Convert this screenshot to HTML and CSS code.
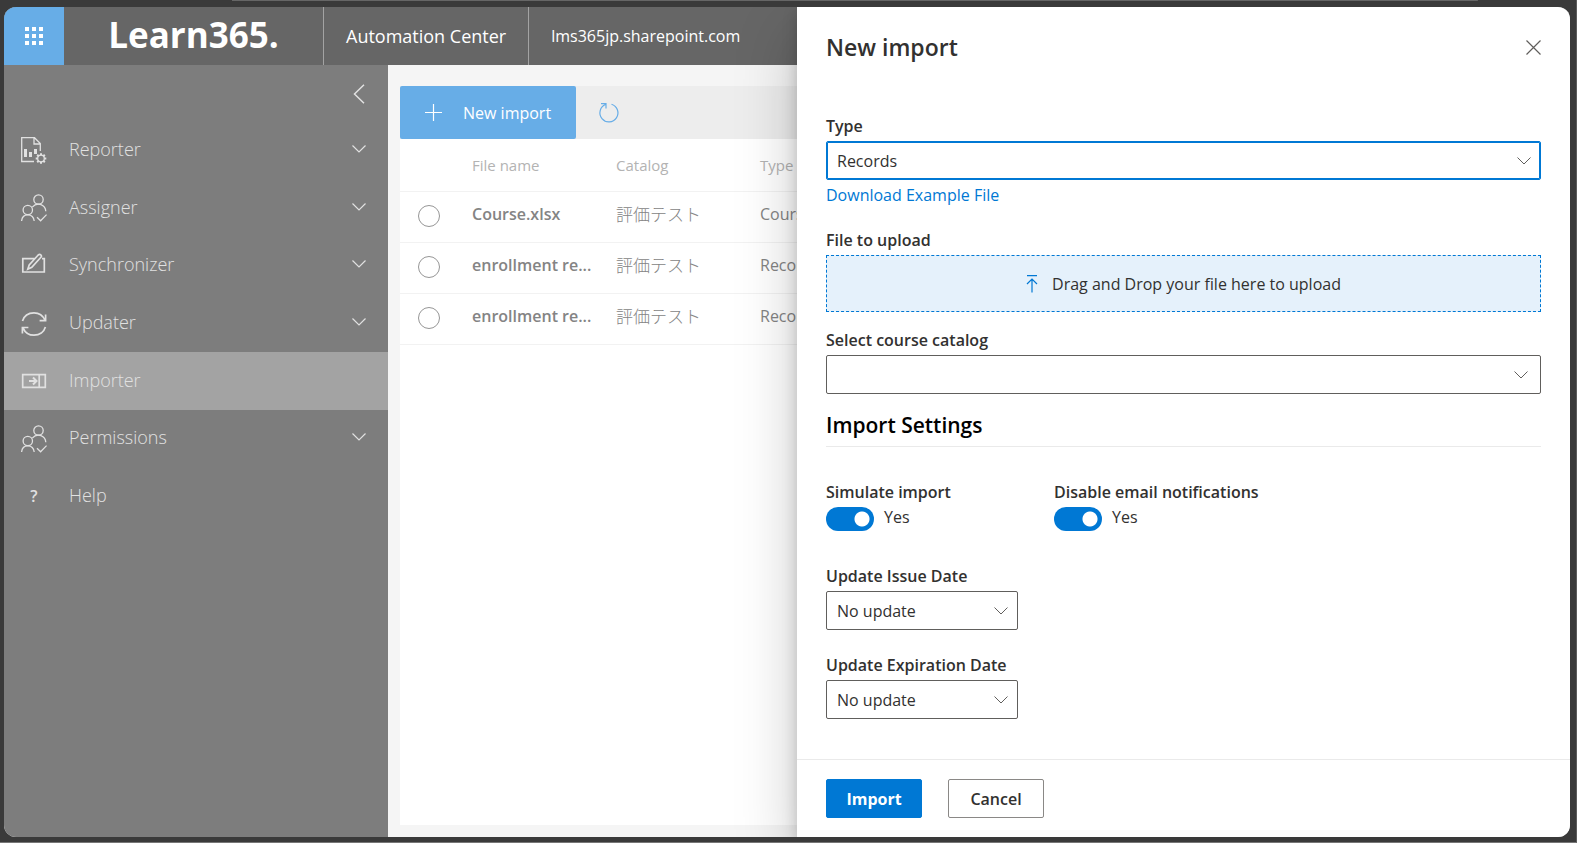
FILE: index.html
```html
<!DOCTYPE html>
<html lang="en">

<head>
    <meta charset="utf-8">
    <meta name="viewport" content="width=device-width, initial-scale=1.0">
    <title>Learn365 Automation Center</title>
    <link rel="stylesheet" href="styles.css">
</head>

<body>

    <!-- shared icons -->
    <svg class="symbols" aria-hidden="true">
        <symbol id="down" viewBox="0 0 14 8">
            <path d="M.5 .5L7 7L13.5 .5" />
        </symbol>
        <symbol id="people" viewBox="0 0 26 28">
            <circle cx="17.5" cy="5.5" r="4.7" />
            <circle cx="6.8" cy="16" r="4.7" />
            <path d="M11.3 13.2C13.5 10.6 17 9.6 20 10.7C22.8 11.8 24.6 14.3 24.8 17.2M.6 27C.9 23.3 3.4 20.8 6.8 20.8S12.8 23.3 13.2 27M16 23.3L19.6 26.8L25.6 20.6" />
        </symbol>
    </svg>

    <div class="window">
        <header class="topbar">
            <button class="waffle" aria-label="App launcher">
                <svg width="20" height="20" viewBox="0 0 20 20">
                    <path d="M1 1h4v4H1zM8 1h4v4H8zM15 1h4v4h-4zM1 8h4v4H1zM8 8h4v4H8zM15 8h4v4h-4zM1 15h4v4H1zM8 15h4v4H8zM15 15h4v4h-4z" />
                </svg>
            </button>
            <div class="logo">Learn365.</div>
            <div class="app-name">Automation Center</div>
            <div class="tenant">lms365jp.sharepoint.com</div>
        </header>

        <div class="main">
            <aside class="sidebar">
                <button class="collapse" aria-label="Collapse menu">
                    <svg class="line" width="12" height="20" viewBox="0 0 12 20">
                        <path d="M11 .8L1.5 10L11 19.2" />
                    </svg>
                </button>
                <nav>
                    <a href="#">
                        <svg class="icon" width="26" height="28" viewBox="0 0 26 28">
                            <path d="M13 24.5H.7V.7H13.5L19.3 6.5V14M13 .7V7H19.3" />
                            <path class="solid" d="M3 12h3v8H3zM8 15h3v5H8zM13 12h3v5h-3z" />
                            <circle cx="20" cy="21.5" r="3.3" />
                            <path class="teeth" d="M20 16.2v2M20 24.8v2M14.7 21.5h2M23.3 21.5h2M16.2 17.7l1.5 1.5M22.3 23.8l1.5 1.5M16.2 25.3l1.5-1.5M22.3 19.2l1.5-1.5" />
                        </svg>
                        <span>Reporter</span>
                        <svg class="down line"><use href="#down" /></svg>
                    </a>
                    <a href="#">
                        <svg class="icon" width="26" height="28"><use href="#people" /></svg>
                        <span>Assigner</span>
                        <svg class="down line"><use href="#down" /></svg>
                    </a>
                    <a href="#">
                        <svg class="icon bold" width="26" height="28" viewBox="0 0 26 28">
                            <path d="M14 6.6H1.8V20H23.3V6.6H21M6.8 17.2L8.2 13L17.2 3Q18.6 1.8 19.8 2.8Q21 4 19.9 5.3L10.8 15.4Z" />
                        </svg>
                        <span>Synchronizer</span>
                        <svg class="down line"><use href="#down" /></svg>
                    </a>
                    <a href="#">
                        <svg class="icon bold" width="26" height="28" viewBox="0 0 26 28">
                            <path d="M1.5 11C3 6 7.5 2.8 13 2.8C18 2.8 22 5.500 24 10.2M24.6 4.5V10.6H18.6M24.4 17C23 22 18.500 25.2 13 25.2C8 25.2 4 22.5 2 17.8M1.4 23.5V17.5H7.4" />
                        </svg>
                        <span>Updater</span>
                        <svg class="down line"><use href="#down" /></svg>
                    </a>
                    <a href="#" class="active">
                        <svg class="icon bold" width="26" height="28" viewBox="0 0 26 28">
                            <path d="M1.7 7.7H24.3V20.3H1.7ZM18.2 8V20" />
                            <path class="arrow" d="M8 14H15M12 10.5L15.5 14L12 17.5" />
                        </svg>
                        <span>Importer</span>
                    </a>
                    <a href="#">
                        <svg class="icon" width="26" height="28"><use href="#people" /></svg>
                        <span>Permissions</span>
                        <svg class="down line"><use href="#down" /></svg>
                    </a>
                    <a href="#">
                        <b class="question">?</b>
                        <span>Help</span>
                    </a>
                </nav>
            </aside>

            <main class="content">
                <div class="toolbar">
                    <button class="new-import">
                        <svg class="line" width="17" height="17" viewBox="0 0 17 17">
                            <path d="M8.5 0V17M0 8.5H17" />
                        </svg>
                        New import
                    </button>
                    <button class="refresh" aria-label="Refresh">
                        <svg class="line" width="22" height="22" viewBox="0 0 22 22">
                            <path d="M13.5 2.2A9 9 0 1 1 7.5 2.5M3 1.6H8V6.6" />
                        </svg>
                    </button>
                </div>
                <div class="list">
                    <table>
                        <thead>
                            <tr>
                                <th class="pick"></th>
                                <th>File name</th>
                                <th>Catalog</th>
                                <th>Type</th>
                                <th class="rest"></th>
                            </tr>
                        </thead>
                        <tbody>
                            <tr>
                                <td class="pick"><input type="radio" name="file" aria-label="Course.xlsx"></td>
                                <td class="file">Course.xlsx</td>
                                <td lang="ja">評価テスト</td>
                                <td>Courses</td>
                                <td></td>
                            </tr>
                            <tr>
                                <td class="pick"><input type="radio" name="file" aria-label="enrollment re..."></td>
                                <td class="file">enrollment re...</td>
                                <td lang="ja">評価テスト</td>
                                <td>Records</td>
                                <td></td>
                            </tr>
                            <tr>
                                <td class="pick"><input type="radio" name="file" aria-label="enrollment re..."></td>
                                <td class="file">enrollment re...</td>
                                <td lang="ja">評価テスト</td>
                                <td>Records</td>
                                <td></td>
                            </tr>
                        </tbody>
                    </table>
                </div>
            </main>
        </div>

        <form class="panel">
            <div class="panel-head">
                <h1>New import</h1>
                <button type="button" class="close" aria-label="Close">
                    <svg class="line" width="15" height="15" viewBox="0 0 15 15">
                        <path d="M.5 .5L14.5 14.5M14.5 .5L.5 14.5" />
                    </svg>
                </button>
            </div>

            <div class="panel-body">
                <div class="field type">
                    <label for="type">Type</label>
                    <div class="select focused">
                        <select id="type">
                            <option>Records</option>
                        </select>
                        <svg class="down line"><use href="#down" /></svg>
                    </div>
                    <a href="#">Download Example File</a>
                </div>

                <div class="field upload">
                    <label for="file">File to upload</label>
                    <label class="dropzone" for="file">
                        <svg class="line" width="12" height="18" viewBox="0 0 12 18">
                            <path d="M1 .6H11M6 17.5V4M1 9L6 4L11 9" />
                        </svg>
                        Drag and Drop your file here to upload
                    </label>
                    <input id="file" type="file" hidden>
                </div>

                <div class="field">
                    <label for="catalog">Select course catalog</label>
                    <div class="select combo">
                        <select id="catalog">
                            <option></option>
                        </select>
                        <svg class="down line"><use href="#down" /></svg>
                    </div>
                </div>

                <h2>Import Settings</h2>

                <div class="toggles">
                    <div>
                        <label for="simulate">Simulate import</label>
                        <div class="toggle">
                            <input id="simulate" type="checkbox" role="switch" checked>
                            <span>Yes</span>
                        </div>
                    </div>
                    <div>
                        <label for="emails">Disable email notifications</label>
                        <div class="toggle">
                            <input id="emails" type="checkbox" role="switch" checked>
                            <span>Yes</span>
                        </div>
                    </div>
                </div>

                <div class="dates">
                    <div>
                        <label for="issue">Update Issue Date</label>
                        <div class="select">
                            <select id="issue">
                                <option>No update</option>
                            </select>
                            <svg class="down line"><use href="#down" /></svg>
                        </div>
                    </div>
                    <div>
                        <label for="expiration">Update Expiration Date</label>
                        <div class="select">
                            <select id="expiration">
                                <option>No update</option>
                            </select>
                            <svg class="down line"><use href="#down" /></svg>
                        </div>
                    </div>
                </div>
            </div>

            <div class="panel-foot">
                <button type="button" class="primary">Import</button>
                <button type="button">Cancel</button>
            </div>
        </form>
    </div>

</body>

</html>
```
FILE: styles.css
```css
* {
    box-sizing: border-box;
}

body {
    margin: 0;
    height: 100vh;
    padding: 7px 6px 5px 4px;
    border-right: 1px solid #5c5c5c;
    border-bottom: 1px solid #777;
    background: #3a3a3a linear-gradient(#666, #666) 70% 0 / 79% 1px no-repeat;
    font-family: "Open Sans", "Noto Sans CJK JP", sans-serif;
    font-size: 16px;
    line-height: 24px;
    color: #323130;
}

button,
select {
    font: inherit;
    color: inherit;
}

button {
    padding: 0;
    border: none;
    background: none;
}

a {
    text-decoration: none;
}

.symbols {
    position: absolute;
    width: 0;
    height: 0;
}

.line {
    fill: none;
    stroke: currentColor;
    stroke-width: 1.2;
}

.down {
    width: 14px;
    height: 8px;
}

.window {
    position: relative;
    display: flex;
    flex-direction: column;
    height: 100%;
    overflow: hidden;
    border-radius: 12px;
    background: #f5f5f5;
}

/* top bar */

.topbar {
    display: flex;
    align-items: stretch;
    height: 58px;
    background: #666;
    color: #fff;
    line-height: 58px;
}

.waffle {
    display: flex;
    align-items: center;
    justify-content: center;
    width: 60px;
    background: #67ade7;
}

.waffle svg {
    fill: #fff;
}

.logo {
    width: 260px;
    border-right: 1px solid #a3a3a3;
    font-size: 35px;
    font-weight: 700;
    line-height: 56px;
    text-align: center;
}

.app-name {
    padding: 0 22px;
    border-right: 1px solid #a3a3a3;
    font-size: 18px;
}

.tenant {
    padding-left: 22px;
}

/* side menu */

.main {
    display: flex;
    flex: 1;
}

.sidebar {
    width: 384px;
    background: #7d7d7d;
    color: #e1e1e1;
}

.collapse {
    display: block;
    height: 57px;
    margin-left: auto;
    padding: 0 23px;
}

.collapse svg {
    display: block;
    stroke-width: 1.5;
}

nav {
    display: flex;
    flex-direction: column;
    height: 403px;
}

nav a {
    display: flex;
    flex: 1;
    align-items: center;
    gap: 22px;
    padding: 0 22px 0 17px;
    color: inherit;
    font-size: 18px;
    font-weight: 300;
}

nav a span {
    flex: 1;
}

nav a span,
nav .down {
    margin-bottom: 3px;
}

nav .active {
    background: #a3a3a3;
}

.icon {
    fill: none;
    stroke: currentColor;
    stroke-width: 1.3;
}

.icon.bold {
    stroke-width: 1.7;
}

.icon .solid {
    fill: currentColor;
    stroke: none;
}

.icon .teeth,
.icon .arrow {
    stroke-width: 2;
}

.question {
    width: 26px;
    font-size: 16px;
    font-weight: 600;
    text-align: center;
}

/* import list */

.content {
    display: flex;
    flex: 1;
    flex-direction: column;
    padding: 21px 12px 12px;
}

.toolbar {
    display: flex;
    height: 53px;
    background: #ededed;
}

.new-import {
    display: flex;
    align-items: center;
    gap: 21px;
    padding: 0 25px;
    border-radius: 2px;
    background: #67ade7;
    color: #fff;
}

.refresh {
    padding: 0 22px;
    color: #67ade7;
}

.refresh svg {
    display: block;
}

.list {
    flex: 1;
    background: #fff;
}

table {
    width: 100%;
    border-collapse: collapse;
    table-layout: fixed;
    color: #848484;
}

th,
td {
    width: 144px;
    height: 51px;
    padding: 0 0 5px;
    border-bottom: 1px solid #f2f2f2;
    text-align: left;
}

th {
    height: 52px;
    padding: 0;
    color: #b3b3b3;
    font-size: 15px;
    font-weight: 400;
}

th.rest {
    width: auto;
}

td[lang="ja"] {
    font-family: "Noto Sans CJK JP", sans-serif;
    font-size: 17px;
    font-weight: 300;
}

.pick {
    width: 72px;
    padding: 0 0 2px 18px;
}

.pick input {
    display: block;
    width: 22px;
    height: 22px;
    margin: 0;
    appearance: none;
    border: 1px solid #969696;
    border-radius: 50%;
}

.file {
    font-weight: 600;
}

/* import panel */

.panel {
    position: absolute;
    top: 0;
    right: 0;
    bottom: 0;
    display: flex;
    flex-direction: column;
    width: calc(50% - 10px);
    background: #fff;
    box-shadow: 0 26px 58px rgba(0, 0, 0, .22), 0 5px 14px rgba(0, 0, 0, .18);
}

.panel-head {
    display: flex;
    align-items: center;
    justify-content: space-between;
    height: 80px;
    padding: 0 29px;
}

h1 {
    margin: 0;
    font-size: 23px;
    font-weight: 600;
}

.close {
    color: #605e5c;
}

.close svg {
    display: block;
}

.panel-body {
    flex: 1;
    padding: 27px 29px 0;
}

label {
    display: block;
    margin-bottom: 3px;
    font-weight: 600;
}

.field {
    margin-bottom: 16px;
}

.field.type {
    margin-bottom: 21px;
}

.field a {
    display: block;
    margin-top: 3px;
    color: #0078d4;
}

.select {
    position: relative;
    height: 39px;
}

.select select {
    width: 100%;
    height: 100%;
    padding: 0 10px;
    appearance: none;
    border: 1px solid #605e5c;
    border-radius: 2px;
    background: #fff;
}

.select.focused select {
    border-color: #0078d4;
    box-shadow: inset 0 0 0 1px #0078d4;
}

.select .down {
    position: absolute;
    top: 16px;
    right: 10px;
    color: #605e5c;
    stroke-width: 1;
    pointer-events: none;
}

.select.combo .down {
    right: 13px;
}

.dropzone {
    display: flex;
    align-items: center;
    justify-content: center;
    gap: 14px;
    height: 57px;
    margin: 0;
    border: 1px dashed #0078d4;
    background: #e5f1fb;
    font-weight: 400;
}

.dropzone svg {
    color: #0078d4;
}

h2 {
    margin: 0 0 33px;
    padding-bottom: 6px;
    border-bottom: 1px solid #eaeaea;
    color: #000;
    font-size: 21px;
    font-weight: 600;
    line-height: 30px;
}

.toggles {
    display: flex;
    margin-bottom: 33px;
}

.toggles > div:first-child {
    width: 228px;
}

.toggle {
    display: flex;
    gap: 10px;
    line-height: 20px;
}

.toggle input {
    width: 48px;
    height: 24px;
    margin: 0;
    appearance: none;
    border-radius: 12px;
    background: radial-gradient(circle at 36px 12px, #fff 7px, #0078d4 8px);
}

.dates {
    display: grid;
    gap: 23px;
    width: 192px;
}

.panel-foot {
    display: flex;
    gap: 26px;
    padding: 19px 29px;
    border-top: 1px solid #eaeaea;
}

.panel-foot button {
    width: 96px;
    height: 39px;
    border: 1px solid #8a8886;
    border-radius: 2px;
    font-weight: 600;
}

.panel-foot .primary {
    border-color: #0078d4;
    background: #0078d4;
    color: #fff;
    font-weight: 700;
}
```
